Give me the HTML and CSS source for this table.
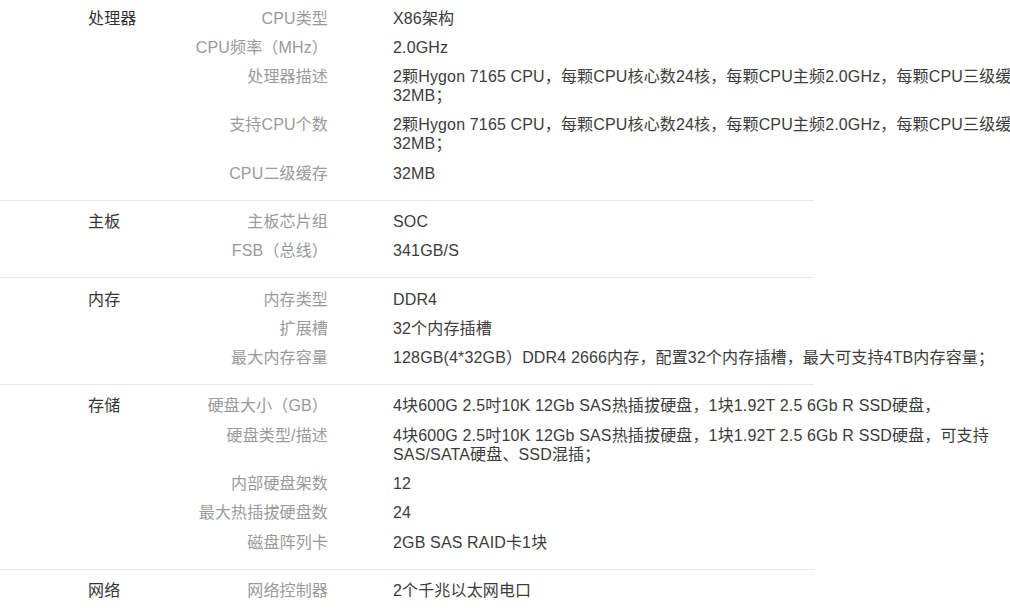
FILE: index.html
```html
<!DOCTYPE html>
<html lang="zh-CN">
<head>
  <meta charset="UTF-8" />
  <meta name="viewport" content="width=device-width, initial-scale=1.0"/>
  <title>产品参数</title>
  <link rel="stylesheet" href="styles.css">
</head>
<body>
  <div class="specs">

    <div class="group">
      <div class="cat">处理器</div>
      <div class="rows">
        <div class="row"><div class="label">CPU类型</div><div class="value">X86架构</div></div>
        <div class="row"><div class="label">CPU频率（MHz）</div><div class="value">2.0GHz</div></div>
        <div class="row"><div class="label">处理器描述</div><div class="value">2颗Hygon 7165 CPU，每颗CPU核心数24核，每颗CPU主频2.0GHz，每颗CPU三级缓存32MB；</div></div>
        <div class="row"><div class="label">支持CPU个数</div><div class="value">2颗Hygon 7165 CPU，每颗CPU核心数24核，每颗CPU主频2.0GHz，每颗CPU三级缓存32MB；</div></div>
        <div class="row"><div class="label">CPU二级缓存</div><div class="value">32MB</div></div>
      </div>
    </div>

    <div class="group">
      <div class="cat">主板</div>
      <div class="rows">
        <div class="row"><div class="label">主板芯片组</div><div class="value">SOC</div></div>
        <div class="row"><div class="label">FSB（总线）</div><div class="value">341GB/S</div></div>
      </div>
    </div>

    <div class="group">
      <div class="cat">内存</div>
      <div class="rows">
        <div class="row"><div class="label">内存类型</div><div class="value">DDR4</div></div>
        <div class="row"><div class="label">扩展槽</div><div class="value">32个内存插槽</div></div>
        <div class="row"><div class="label">最大内存容量</div><div class="value">128GB(4*32GB）DDR4 2666内存，配置32个内存插槽，最大可支持4TB内存容量；</div></div>
      </div>
    </div>

    <div class="group">
      <div class="cat">存储</div>
      <div class="rows">
        <div class="row"><div class="label">硬盘大小（GB）</div><div class="value">4块600G 2.5吋10K 12Gb SAS热插拔硬盘，1块1.92T 2.5 6Gb R SSD硬盘，</div></div>
        <div class="row"><div class="label">硬盘类型/描述</div><div class="value">4块600G 2.5吋10K 12Gb SAS热插拔硬盘，1块1.92T 2.5 6Gb R SSD硬盘，可支持<span class="nw">SAS/SATA</span>硬盘、SSD混插；</div></div>
        <div class="row"><div class="label">内部硬盘架数</div><div class="value">12</div></div>
        <div class="row"><div class="label">最大热插拔硬盘数</div><div class="value">24</div></div>
        <div class="row"><div class="label">磁盘阵列卡</div><div class="value">2GB SAS RAID卡1块</div></div>
      </div>
    </div>

    <div class="group">
      <div class="cat">网络</div>
      <div class="rows">
        <div class="row"><div class="label">网络控制器</div><div class="value">2个千兆以太网电口</div></div>
      </div>
    </div>

  </div>
</body>
</html>
```

FILE: styles.css
```css
html, body {
  overflow: hidden;
}
body {
  margin: 0;
  background: #fff;
  font-family: "Liberation Sans", "Noto Sans CJK SC", sans-serif;
  font-size: 16px;
  line-height: 19px;
  letter-spacing: 0.15px;
  color: #333;
}
.specs {
  margin-top: -2.5px;
  width: 814px;
}
.group {
  display: flex;
  padding: 6px 0 12px 88px;
  border-bottom: 1px solid #e8e8e8;
}
.cat {
  width: 100px;
  flex-shrink: 0;
  padding-top: 5.15px;
  color: #333;
}
.rows {
  display: flex;
  flex-direction: column;
}
.row {
  display: flex;
  padding: 5.15px 0;
}
.label {
  width: 140px;
  flex-shrink: 0;
  text-align: right;
  color: #9a9a9a;
}
.value {
  width: 640px;
  flex-shrink: 0;
  margin-left: 65px;
  color: #3c3c3c;
}
.nw {
  white-space: nowrap;
}
```
